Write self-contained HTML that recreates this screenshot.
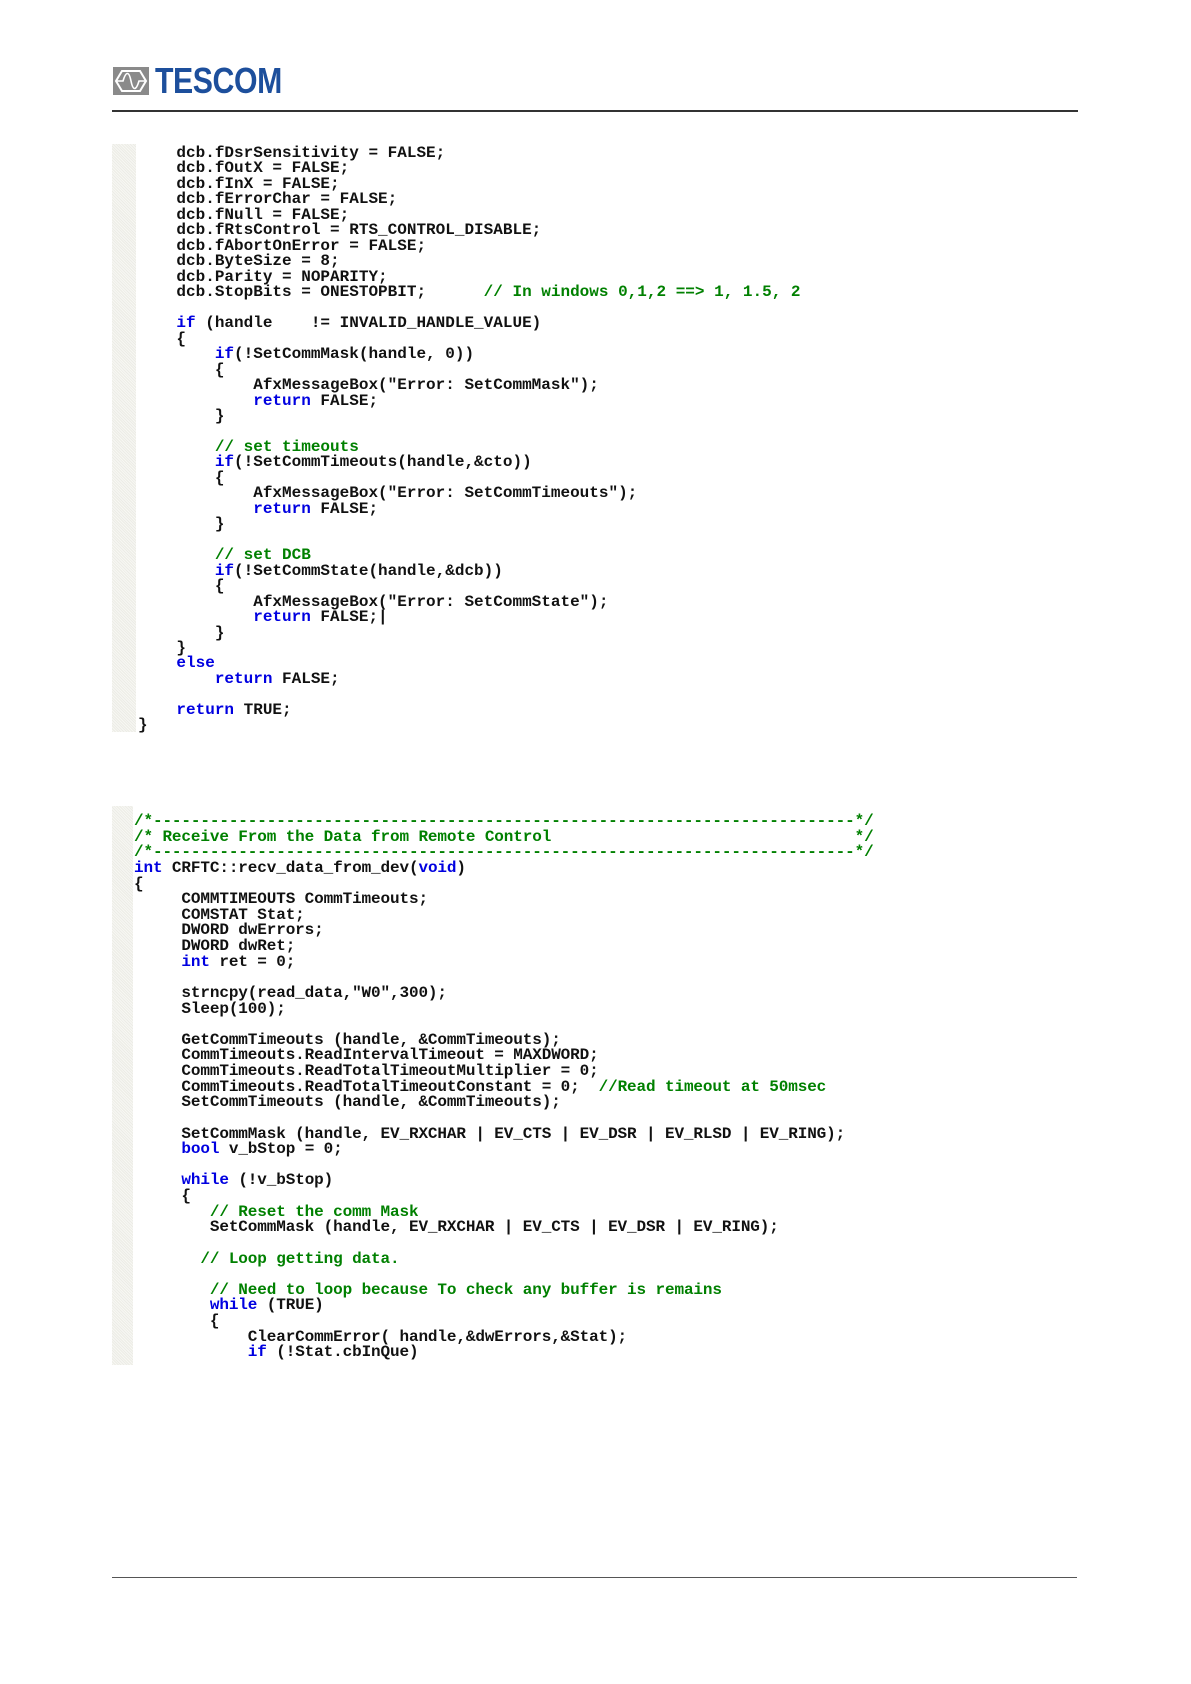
<!DOCTYPE html>
<html><head><meta charset="utf-8"><style>
body{margin:0;background:#fff;width:1191px;height:1684px;position:relative;overflow:hidden}
.g{position:absolute;background:repeating-linear-gradient(45deg,#ecece6 0 1px,#f7f7f3 1px 2px)}
pre{position:absolute;margin:0;font-family:"Liberation Mono",monospace;font-size:16px;font-weight:bold;color:#111;white-space:pre}
.k{color:#0000e0}.c{color:#008000}
</style></head><body>
<svg style="position:absolute;left:113px;top:67px" width="36" height="28" viewBox="0 0 36 28">
<rect width="36" height="28" fill="#8a8a8a"/>
<polygon points="9,4 27,4 33,14 27,24 9,24 3,14" fill="none" stroke="#fff" stroke-width="2"/>
<path d="M4,14 H10 C13,4 16,4 18,14 C20,24 23,24 26,14 H32" fill="none" stroke="#fff" stroke-width="1.6"/>
</svg>
<div style="position:absolute;left:155px;top:60px;font-family:'Liberation Sans',sans-serif;font-weight:bold;font-size:36px;color:#1d4f9c;transform:scaleX(0.84);transform-origin:left top;letter-spacing:-0.5px">TESCOM</div>
<div style="position:absolute;left:112px;top:110px;width:966px;height:2px;background:#333"></div>
<div class="g" style="left:112px;top:144px;width:24px;height:588px"></div>
<pre style="left:138px;top:146px;line-height:15.47px">    dcb.fDsrSensitivity = FALSE;
    dcb.fOutX = FALSE;
    dcb.fInX = FALSE;
    dcb.fErrorChar = FALSE;
    dcb.fNull = FALSE;
    dcb.fRtsControl = RTS_CONTROL_DISABLE;
    dcb.fAbortOnError = FALSE;
    dcb.ByteSize = 8;
    dcb.Parity = NOPARITY;
    dcb.StopBits = ONESTOPBIT;      <span class="c">// In windows 0,1,2 ==&gt; 1, 1.5, 2</span>

    <span class="k">if</span> (handle    != INVALID_HANDLE_VALUE)
    {
        <span class="k">if</span>(!SetCommMask(handle, 0))
        {
            AfxMessageBox("Error: SetCommMask");
            <span class="k">return</span> FALSE;
        }

        <span class="c">// set timeouts</span>
        <span class="k">if</span>(!SetCommTimeouts(handle,&amp;cto))
        {
            AfxMessageBox("Error: SetCommTimeouts");
            <span class="k">return</span> FALSE;
        }

        <span class="c">// set DCB</span>
        <span class="k">if</span>(!SetCommState(handle,&amp;dcb))
        {
            AfxMessageBox("Error: SetCommState");
            <span class="k">return</span> FALSE;|
        }
    }
    <span class="k">else</span>
        <span class="k">return</span> FALSE;

    <span class="k">return</span> TRUE;
}</pre>
<div class="g" style="left:112px;top:806px;width:21px;height:559px"></div>
<pre style="left:134px;top:814px;line-height:15.62px;letter-spacing:-0.12px"><span class="c">/*--------------------------------------------------------------------------*/
/* Receive From the Data from Remote Control                                */
/*--------------------------------------------------------------------------*/</span>
<span class="k">int</span> CRFTC::recv_data_from_dev(<span class="k">void</span>)
{
     COMMTIMEOUTS CommTimeouts;
     COMSTAT Stat;
     DWORD dwErrors;
     DWORD dwRet;
     <span class="k">int</span> ret = 0;

     strncpy(read_data,"W0",300);
     Sleep(100);

     GetCommTimeouts (handle, &amp;CommTimeouts);
     CommTimeouts.ReadIntervalTimeout = MAXDWORD;
     CommTimeouts.ReadTotalTimeoutMultiplier = 0;
     CommTimeouts.ReadTotalTimeoutConstant = 0;  <span class="c">//Read timeout at 50msec</span>
     SetCommTimeouts (handle, &amp;CommTimeouts);

     SetCommMask (handle, EV_RXCHAR | EV_CTS | EV_DSR | EV_RLSD | EV_RING);
     <span class="k">bool</span> v_bStop = 0;

     <span class="k">while</span> (!v_bStop)
     {
        <span class="c">// Reset the comm Mask</span>
        SetCommMask (handle, EV_RXCHAR | EV_CTS | EV_DSR | EV_RING);

       <span class="c">// Loop getting data.</span>

        <span class="c">// Need to loop because To check any buffer is remains</span>
        <span class="k">while</span> (TRUE)
        {
            ClearCommError( handle,&amp;dwErrors,&amp;Stat);
            <span class="k">if</span> (!Stat.cbInQue)</pre>
<div style="position:absolute;left:112px;top:1577px;width:965px;height:1px;background:#555"></div>
</body></html>
